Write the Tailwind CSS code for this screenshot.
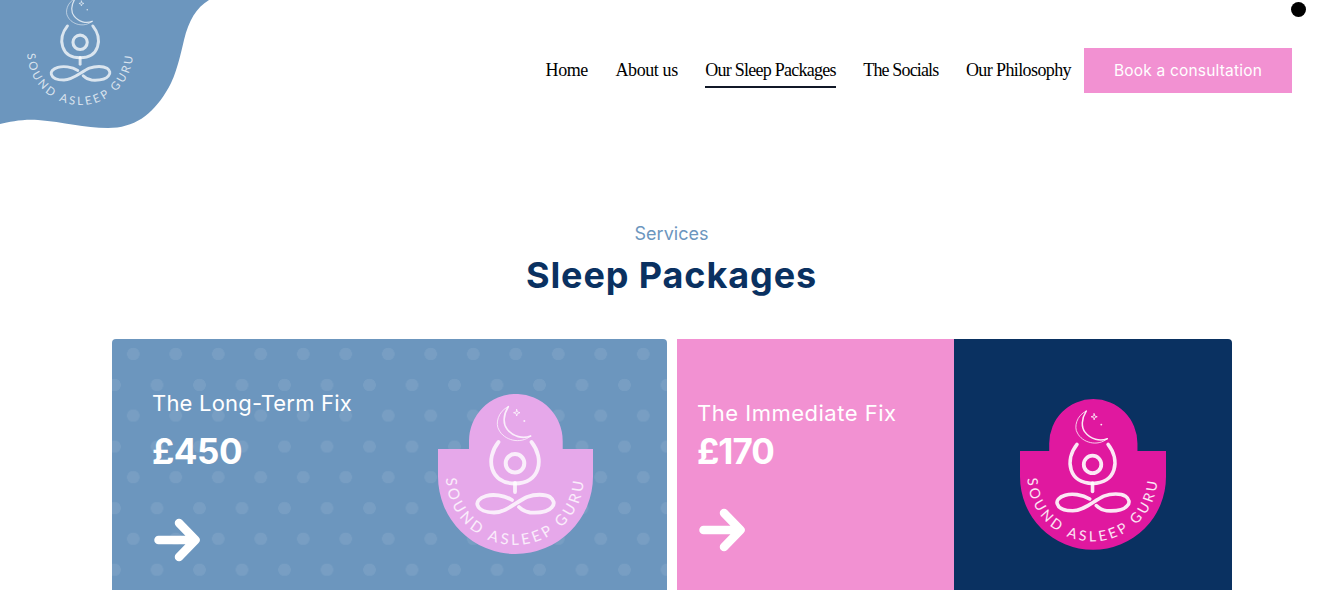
<!DOCTYPE html>
<html lang="en">
<head>
    <meta charset="UTF-8">
    <meta name="viewport" content="width=device-width, initial-scale=1.0">
    <title>Sound Asleep Guru - Sleep Packages</title>
    <script src="https://cdn.jsdelivr.net/npm/@tailwindcss/browser@4"></script>
</head>
<body class="relative h-[590px] overflow-hidden bg-white font-['Inter',sans-serif]">
    <!-- shared logo mark -->
    <svg class="absolute w-0 h-0" aria-hidden="true">
        <defs>
            <symbol id="mark" viewBox="0 0 155 160">
                <path id="ring-text" d="M8 82 A69 69 0 0 0 146 82" fill="none"/>
                <g fill="none" stroke="currentColor" stroke-linecap="round" stroke-linejoin="round">
                    <path stroke-width="0.9" d="M70.3 12.7 C60 17 57 30 61 36 C66 46 82 51 92.7 42"/>
                    <path stroke-width="1.6" d="M70.3 12.7 C65 21 65 30 69 35 C75 43 85 45 92.7 42"/>
                    <path stroke-width="0.9" d="M78.7 15.5 L79.5 18 L82 18.7 L79.5 19.5 L78.7 22 L78 19.5 L75.5 18.7 L78 18Z"/>
                    <circle cx="77" cy="69.3" r="9.3" stroke-width="4"/>
                    <path stroke-width="3.8" d="M60.5 48 C47 65 52 89.5 77 89.5 C102 89.5 107 65 93.5 48"/>
                    <path stroke-width="3.8" d="M77 89 V98"/>
                    <path stroke-width="3.8" d="M74 106 C66 101 55 100 48 102 C41 104 38.5 108 39.5 111 C41 116 48 118.5 56 118.5 C68 118.5 78 108 89 103 C97 100 107 100 112 103 C116 106 117 110 114 113 C110 118 100 119 92 118.5 C88 118 84 116 81 113"/>
                </g>
                <circle cx="86.3" cy="27" r="1" fill="currentColor"/>
                <text fill="currentColor" font-family="Lato, sans-serif" font-size="15" letter-spacing="3.3" text-anchor="middle">
                    <textPath href="#ring-text" startOffset="50%">SOUND ASLEEP GURU</textPath>
                </text>
            </symbol>
        </defs>
    </svg>

    <!-- top corner blob with logo -->
    <a href="#" class="absolute left-0 top-0 block w-[210px] h-[130px]">
        <svg viewBox="0 0 210 130" class="w-[210px] h-[130px]">
            <path fill="#6c96be" d="M0 0 H209 C196 8 189 20 184 40 C178 66 174 80 166 92 C152 115 134 128 108 128 C84 128 64 122 38 120 C22 119 10 122 0 124 Z"/>
        </svg>
        <svg class="absolute left-[21px] top-[-11px] w-[119px] h-[123px] text-white/75">
            <use href="#mark"/>
        </svg>
    </a>

    <div class="absolute left-[1291px] top-[2px] w-[15px] h-[15px] rounded-full bg-black"></div>

    <header class="flex justify-end items-center h-[141px] pr-[51px]">
        <nav class="flex items-center gap-[27.5px] font-['Liberation_Serif',serif] text-[18px] text-black">
            <a href="#" class="whitespace-nowrap tracking-[-0.4px]">Home</a>
            <a href="#" class="whitespace-nowrap tracking-[-0.4px]">About us</a>
            <a href="#" class="whitespace-nowrap tracking-[-0.75px] relative after:absolute after:left-0 after:right-0 after:bottom-[-4px] after:h-[2px] after:bg-[#111827]">Our Sleep Packages</a>
            <a href="#" class="whitespace-nowrap tracking-[-0.85px]">The Socials</a>
            <a href="#" class="whitespace-nowrap tracking-[-0.6px]">Our Philosophy</a>
        </nav>
        <a href="#" class="flex items-center justify-center ml-[13px] w-[208px] h-[45px] pt-[1px] bg-[#f291d2] text-white text-[15.5px] tracking-[0.2px] whitespace-nowrap">Book a consultation</a>
    </header>

    <main class="px-[112px]">
        <div class="text-center pt-[81px]">
            <p class="text-[#6c96be] text-[18px] leading-6">Services</p>
            <h1 class="mt-[6px] text-[#0a3161] text-[36px] tracking-[0.9px] leading-[46px] font-bold">Sleep Packages</h1>
        </div>

        <div class="flex gap-[10px] mt-[41px]">
            <!-- long-term card -->
            <a href="#" class="flex shrink-0 justify-between w-[555px] h-[251px] rounded-t bg-[#6c96be] text-white pl-10 pr-[74px] bg-[radial-gradient(circle,rgba(255,255,255,0.08)_6px,transparent_6.5px),radial-gradient(circle,rgba(255,255,255,0.08)_6px,transparent_6.5px)] bg-[size:42.5px_61.6px] [background-position:0px_-15.8px,23.75px_15.2px]">
                <div>
                    <h2 class="mt-[49px] text-[22px] tracking-[0.2px] leading-[30px]">The Long-Term Fix</h2>
                    <p class="mt-[11px] text-[35px] tracking-[-0.5px] leading-[44px] font-bold">£450</p>
                    <svg class="mt-[45px] ml-[2px]" width="46" height="44" viewBox="0 0 46 44" fill="none" stroke="white" stroke-width="8.5" stroke-linecap="round" stroke-linejoin="round"><path d="M4.5 22 H39.5 M25 5 L41.5 22 L25 39"/></svg>
                </div>
                <svg viewBox="0 0 155 160" class="mt-[55px] w-[155px] h-[160px] text-white/80">
                    <path fill="#e6a8ea" d="M31 55 V47 A46.8 47 0 0 1 124.7 47 V55 H155 V82.5 A77.5 77.5 0 0 1 0 82.5 V55 Z"/>
                    <use href="#mark" width="155" height="160"/>
                </svg>
            </a>

            <!-- immediate card -->
            <a href="#" class="flex shrink-0 w-[555px] h-[251px] rounded-tr overflow-hidden text-white">
                <div class="w-[277px] bg-[#f291d2] pl-5">
                    <h2 class="mt-[59px] text-[22px] tracking-[0.5px] leading-[30px]">The Immediate Fix</h2>
                    <p class="mt-[1px] text-[35px] tracking-[-1px] leading-[44px] font-bold">£170</p>
                    <svg class="mt-[35px] ml-[2px]" width="46" height="44" viewBox="0 0 46 44" fill="none" stroke="white" stroke-width="8.5" stroke-linecap="round" stroke-linejoin="round"><path d="M4.5 22 H39.5 M25 5 L41.5 22 L25 39"/></svg>
                </div>
                <div class="flex-1 flex justify-center bg-[#0a3161] pt-[60px]">
                    <svg viewBox="0 0 155 160" class="w-[146px] h-[151px] text-white/90">
                        <path fill="#e0189f" d="M31 55 V47 A46.8 47 0 0 1 124.7 47 V55 H155 V82.5 A77.5 77.5 0 0 1 0 82.5 V55 Z"/>
                        <use href="#mark" width="155" height="160"/>
                    </svg>
                </div>
            </a>
        </div>
    </main>
</body>
</html>
